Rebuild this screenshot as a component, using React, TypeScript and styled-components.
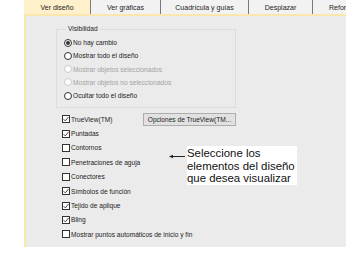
import React from "react";
import styled, { createGlobalStyle } from "styled-components";

const GlobalStyle = createGlobalStyle`
  body {
    margin: 0;
    background: #ffffff;
    font-family: "Liberation Sans", Arial, sans-serif;
  }
`;

const Window = styled.div`
  width: 357px;
  height: 262px;
  background: #ffffff;
  overflow: hidden;
`;

const Dialog = styled.div`
  margin-left: 24px;
  width: 322px;
`;

const TabStrip = styled.div`
  display: flex;
  height: 14px;
  background: #f2f2f2;
  border-bottom: 2px solid #fbe7ae;
  overflow: hidden;
`;

const Tab = styled.div<{ $w: number; $active?: boolean }>`
  flex: 0 0 ${(p) => p.$w}px;
  display: flex;
  align-items: center;
  justify-content: center;
  background: ${(p) => (p.$active ? "#fdf0cb" : "#f2f2f2")};
  border-right: 1px solid #7a7a7a;
  font-size: 7px;
  color: #1c1c1c;
  white-space: nowrap;
  box-sizing: border-box;
  padding-top: 1px;
`;

const LastTab = styled(Tab)`
  justify-content: flex-start;
  padding-left: 16px;
  border-right: none;
`;

const Panel = styled.div`
  position: relative;
  height: 231px;
  background: #ebebeb;
  border-left: 2px solid #fbe7ae;
  padding-top: 9px;
  box-sizing: border-box;
`;

const GroupBox = styled.fieldset`
  margin: 0 0 0 30px;
  width: 180px;
  height: 83px;
  box-sizing: border-box;
  border: 1px solid #dcdcdc;
  padding: 3px 0 0 7px;
`;

const Legend = styled.legend`
  font-size: 6.6px;
  color: #1c1c1c;
  padding: 0 2px;
  margin-left: 2px;
  line-height: 8px;
`;

const OptionRow = styled.div<{ $h: number; $disabled?: boolean }>`
  display: flex;
  align-items: center;
  height: ${(p) => p.$h}px;
  gap: 1px;
  font-size: 6.6px;
  color: ${(p) => (p.$disabled ? "#a3a3a3" : "#1c1c1c")};
  white-space: nowrap;
`;

const RadioCircle = styled.span<{ $disabled?: boolean; $on?: boolean }>`
  width: 8px;
  height: 8px;
  border-radius: 50%;
  box-sizing: border-box;
  border: 1px solid ${(p) => (p.$disabled ? "#c8c8c8" : "#333333")};
  background: #ffffff;
  display: flex;
  align-items: center;
  justify-content: center;
  flex: 0 0 auto;
  &::after {
    content: "";
    width: 4px;
    height: 4px;
    border-radius: 50%;
    background: #333333;
    display: ${(p) => (p.$on ? "block" : "none")};
  }
`;

const CheckList = styled.div`
  margin: 4px 0 0 36px;
  width: 174px;
`;

const CheckBox = styled.span`
  width: 8px;
  height: 8px;
  box-sizing: border-box;
  border: 1px solid #333333;
  background: #ffffff;
  display: flex;
  align-items: center;
  justify-content: center;
  flex: 0 0 auto;
`;

const Spacer = styled.span`
  flex: 1;
`;

const OptionsButton = styled.button`
  width: 93px;
  height: 13px;
  padding: 0;
  box-sizing: border-box;
  border: 1px solid #adadad;
  background: #e1e1e1;
  font-family: "Liberation Sans", Arial, sans-serif;
  font-size: 6.6px;
  color: #1c1c1c;
  white-space: nowrap;
  margin-top: 1px;
`;

const Callout = styled.div`
  position: absolute;
  left: 143px;
  top: 130px;
  display: flex;
  align-items: flex-start;
`;

const Arrow = styled.svg`
  margin: 8px 2px 0 0;
`;

const CalloutText = styled.div`
  background: #ffffff;
  height: 39px;
  padding: 1px 2px 0 0;
  box-sizing: border-box;
  font-family: "Liberation Sans", Arial, sans-serif;
  font-size: 11.4px;
  line-height: 12.6px;
  color: #111111;
  white-space: nowrap;
`;

function Check() {
  return (
    <CheckBox>
      <svg width="6" height="6" viewBox="0 0 6 6">
        <polyline points="0.6,3.2 2.3,4.9 5.5,1" fill="none" stroke="#333" strokeWidth="0.9" />
      </svg>
    </CheckBox>
  );
}

const radios = [
  { label: "No hay cambio", on: true },
  { label: "Mostrar todo el diseño" },
  { label: "Mostrar objetos seleccionados", disabled: true },
  { label: "Mostrar objetos no seleccionados", disabled: true },
  { label: "Ocultar todo el diseño" },
];

const checks = [
  { label: "Puntadas", on: true },
  { label: "Contornos" },
  { label: "Penetraciones de aguja" },
  { label: "Conectores" },
  { label: "Símbolos de función", on: true },
  { label: "Tejido de aplique", on: true },
  { label: "Bling", on: true },
  { label: "Mostrar puntos automáticos de inicio y fin" },
];

export default function App() {
  return (
    <Window>
      <GlobalStyle />
      <Dialog>
        <TabStrip>
          <Tab $w={67} $active>Ver diseño</Tab>
          <Tab $w={70}>Ver gráficas</Tab>
          <Tab $w={88}>Cuadrícula y guías</Tab>
          <Tab $w={64}>Desplazar</Tab>
          <LastTab $w={60}>Reforzar</LastTab>
        </TabStrip>
        <Panel>
          <GroupBox>
            <Legend>Visibilidad</Legend>
            {radios.map((r) => (
              <OptionRow key={r.label} $h={13.25} $disabled={r.disabled}>
                <RadioCircle $disabled={r.disabled} $on={r.on} />
                {r.label}
              </OptionRow>
            ))}
          </GroupBox>
          <CheckList>
            <OptionRow $h={14.4}>
              <Check />
              TrueView(TM)
              <Spacer />
              <OptionsButton>Opciones de TrueView(TM...</OptionsButton>
            </OptionRow>
            {checks.map((c) => (
              <OptionRow key={c.label} $h={14.4}>
                {c.on ? <Check /> : <CheckBox />}
                {c.label}
              </OptionRow>
            ))}
          </CheckList>
          <Callout>
            <Arrow width="16" height="5" viewBox="0 0 16 5">
              <line x1="3" y1="2.5" x2="16" y2="2.5" stroke="#222" strokeWidth="1" />
              <polygon points="0,2.5 4,0.8 4,4.2" fill="#222" />
            </Arrow>
            <CalloutText>
              Seleccione los
              <br />
              elementos del diseño
              <br />
              que desea visualizar
            </CalloutText>
          </Callout>
        </Panel>
      </Dialog>
    </Window>
  );
}
